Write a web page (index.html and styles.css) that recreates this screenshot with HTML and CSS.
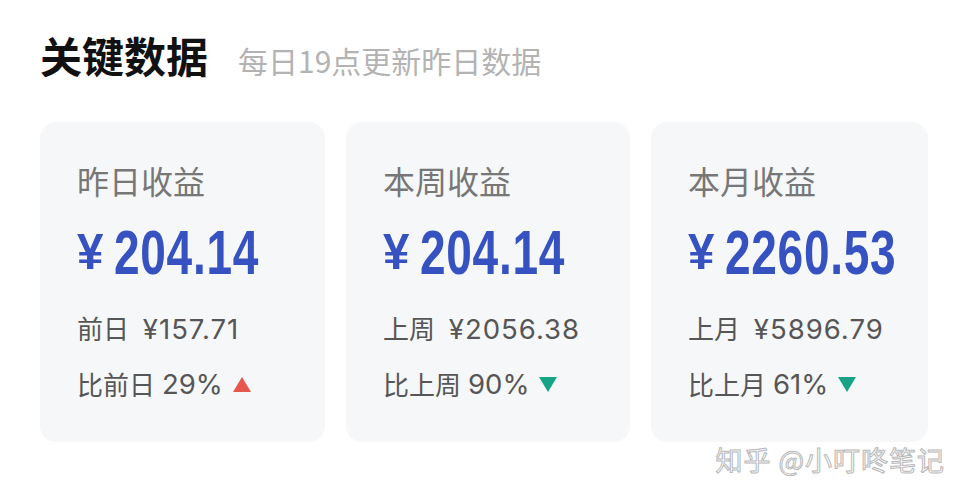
FILE: index.html
```html
<!DOCTYPE html>
<html lang="zh-CN">
<head>
    <meta charset="UTF-8">
    <meta name="viewport" content="width=device-width, initial-scale=1.0">
    <title>关键数据</title>
    <link rel="stylesheet" href="styles.css">
</head>
<body>
    <header class="summary-header">
        <h1>关键数据</h1>
        <p>每日19点更新昨日数据</p>
    </header>

    <main class="card-row">
        <section class="stat-card">
            <h2>昨日收益</h2>
            <div class="amount"><span class="yen">¥</span><span class="digits">204.14</span></div>
            <p class="prev">前日 <span class="num">¥157.71</span></p>
            <p class="change">比前日<span class="num">29%</span><svg class="arrow up" width="18" height="15" viewBox="0 0 18 15"><polygon points="9,0 18,15 0,15"/></svg></p>
        </section>
        <section class="stat-card">
            <h2>本周收益</h2>
            <div class="amount"><span class="yen">¥</span><span class="digits">204.14</span></div>
            <p class="prev">上周 <span class="num">¥2056.38</span></p>
            <p class="change">比上周<span class="num">90%</span><svg class="arrow down" width="18" height="15" viewBox="0 0 18 15"><polygon points="0,0 18,0 9,15"/></svg></p>
        </section>
        <section class="stat-card">
            <h2>本月收益</h2>
            <div class="amount"><span class="yen">¥</span><span class="digits">2260.53</span></div>
            <p class="prev">上月 <span class="num">¥5896.79</span></p>
            <p class="change">比上月<span class="num">61%</span><svg class="arrow down" width="18" height="15" viewBox="0 0 18 15"><polygon points="0,0 18,0 9,15"/></svg></p>
        </section>
    </main>

    <span class="watermark">知乎 @小叮咚笔记</span>
</body>
</html>
```

FILE: styles.css
```css
body {
    margin: 0;
    padding: 30px 0 0 40px;
    background-color: #fff;
    font-family: "Noto Sans CJK SC", sans-serif;
    position: relative;
    height: 470px;
    overflow: hidden;
}

.summary-header {
    display: flex;
    align-items: baseline;
    gap: 30px;
    height: 52px;
}

.summary-header > h1 {
    margin: 0;
    font-size: 42px;
    font-weight: 700;
    line-height: 50px;
    color: #111;
}

.summary-header > p {
    margin: 0;
    font-size: 30px;
    line-height: 50px;
    color: #b3b3b3;
}

.card-row {
    display: grid;
    grid-template-columns: 285px 284px 277px;
    gap: 21px;
    margin-top: 40px;
}

.stat-card {
    background-color: #f6f7f9;
    border-radius: 16px;
    padding: 38px 0 41px 37px;
}

.stat-card > h2 {
    margin: 0;
    font-size: 32px;
    font-weight: 400;
    line-height: 40px;
    color: #777;
}

.amount {
    margin-top: 17px;
    height: 70px;
    display: flex;
    align-items: center;
    font-family: "Liberation Sans", sans-serif;
    font-weight: 700;
    color: #3652c1;
}

.amount > .yen {
    flex-shrink: 0;
    font-size: 50px;
    line-height: 70px;
    display: inline-block;
    transform: scaleX(0.95);
    transform-origin: left center;
    width: 37px;
}

/* narrow the bold digits into a condensed look */
.amount > .digits {
    flex-shrink: 0;
    font-size: 63px;
    line-height: 70px;
    display: inline-block;
    transform: scaleX(0.73);
    transform-origin: left center;
    letter-spacing: 1px;
}

.prev, .change {
    margin: 0;
    font-size: 26px;
    line-height: 34px;
    color: #565656;
}

.num {
    font-family: "Inter", sans-serif;
    font-size: 27.5px;
}

.prev {
    margin-top: 24px;
}

.prev > .num {
    margin-left: 8px;
    letter-spacing: 1px;
}

.change {
    margin-top: 21px;
    display: flex;
    align-items: center;
}

.change > .num {
    margin-left: 7px;
}

.arrow {
    margin-left: 10px;
}

.arrow.up {
    fill: #e5574d;
}

.arrow.down {
    fill: #17a486;
}

/* zhihu watermark in the bottom right corner */
.watermark {
    position: absolute;
    right: 28px;
    bottom: 21px;
    font-size: 27px;
    color: #fff;
    -webkit-text-stroke: 1px #b8b8b8;
    letter-spacing: 1px;
}
```
